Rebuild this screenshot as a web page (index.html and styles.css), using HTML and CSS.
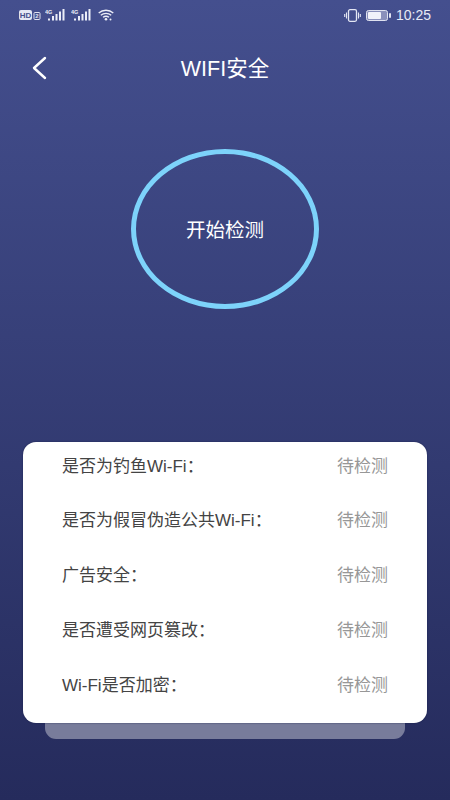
FILE: index.html
```html
<!DOCTYPE html>
<html lang="zh-CN">
<head>
<meta charset="utf-8">
<title>WIFI安全</title>
<link rel="stylesheet" href="styles.css">
</head>
<body>
<div class="page">
  <div class="status">
    <div class="status-left">
      <svg class="ic-hd" viewBox="0 0 22 10" width="22" height="10"><rect x="0" y="0" width="13" height="10" rx="2" fill="#e4e7f4"/><text x="6.5" y="8" class="hd-text">HD</text><rect x="15" y="2.5" width="6" height="7" rx="1" fill="none" stroke="#dfe2f0" stroke-width="1"/><text x="18" y="8.3" class="hd-num">2</text></svg>
      <svg class="ic-sig" viewBox="0 0 22 14" width="22" height="14"><text x="0" y="5.5" class="net">4G</text><g fill="#eceef8"><rect x="3" y="10.5" width="2" height="2"/><rect x="7" y="8" width="2" height="4.500"/><rect x="10.500" y="6" width="2" height="6.500"/><rect x="14" y="3.500" width="2" height="9"/><rect x="17.500" y="1" width="2" height="11.500"/></g></svg>
      <svg class="ic-sig" viewBox="0 0 22 14" width="22" height="14"><text x="0" y="5.5" class="net">4G</text><g fill="#eceef8"><rect x="3" y="10.5" width="2" height="2"/><rect x="7" y="8" width="2" height="4.500"/><rect x="10.500" y="6" width="2" height="6.500"/><rect x="14" y="3.500" width="2" height="9"/><rect x="17.500" y="1" width="2" height="11.500"/></g></svg>
      <svg class="ic-wifi" viewBox="0 0 16 12" width="16" height="12"><g fill="none" stroke="#eceef8" stroke-width="1.300"><path d="M.7 4C4.800.3 11.200.3 15.300 4"/><path d="M2.800 6.200C5.800 3.700 10.200 3.700 13.200 6.200"/><path d="M5 8.300C6.800 7 9.200 7 11 8.300"/></g><circle cx="8" cy="10.300" r="1.300" fill="#eceef8"/><circle cx="12.500" cy="10.500" r="1" fill="#eceef8"/></svg>
    </div>
    <div class="status-right">
      <svg class="ic-vib" viewBox="0 0 17 13" width="17" height="13"><rect x="4.500" y=".7" width="8" height="11.600" rx="1.500" fill="none" stroke="#e4e7f4" stroke-width="1.300"/><path d="M2.500 3.500v6M.7 5v3M14.500 3.500v6M16.300 5v3" stroke="#e4e7f4" stroke-width="1.100" fill="none"/></svg>
      <svg class="ic-bat" viewBox="0 0 25 11" width="25" height="11"><rect x=".5" y=".5" width="21" height="10" rx="2" fill="#8a90bb" stroke="#dfe2f0"/><rect x="2" y="2" width="13" height="7" rx="1" fill="#f1f2fa"/><rect x="23" y="3" width="2" height="5" rx="1" fill="#dfe2f0"/></svg>
      <span class="time">10:25</span>
    </div>
  </div>
  <header class="nav">
    <svg class="back" viewBox="0 0 16 24" width="16" height="24"><path d="M14 2 3 12l11 10" fill="none" stroke="#fff" stroke-width="2.400" stroke-linecap="round" stroke-linejoin="round"/></svg>
    <h1 class="title">WIFI安全</h1>
  </header>
  <div class="ring-wrap">
    <div class="ring">开始检测</div>
  </div>
  <div class="card-wrap">
    <div class="card-back"></div>
    <ul class="card">
      <li class="row"><span>是否为钓鱼Wi-Fi：</span><span class="state">待检测</span></li>
      <li class="row"><span>是否为假冒伪造公共Wi-Fi：</span><span class="state">待检测</span></li>
      <li class="row"><span>广告安全：</span><span class="state">待检测</span></li>
      <li class="row"><span>是否遭受网页篡改：</span><span class="state">待检测</span></li>
      <li class="row"><span>Wi-Fi是否加密：</span><span class="state">待检测</span></li>
    </ul>
  </div>
</div>
</body>
</html>
```

FILE: styles.css
```css
* { box-sizing: border-box; }
html, body { margin: 0; padding: 0; }
body { font-family: "Liberation Sans", "Noto Sans CJK SC", sans-serif; }
.page {
  width: 450px;
  height: 800px;
  overflow: hidden;
  background: linear-gradient(180deg, #444f8e 0%, #252b5c 100%);
  display: flex;
  flex-direction: column;
}
.status {
  height: 30px;
  padding: 0 19px 0 19px;
  display: flex;
  justify-content: space-between;
  align-items: center;
}
.status-left, .status-right { display: flex; align-items: center; }
.status-left { gap: 4px; }
.status-right { gap: 5px; }
.hd-text { font: bold 8px "Liberation Sans", sans-serif; fill: #444f8e; text-anchor: middle; }
.hd-num { font: bold 6px "Liberation Sans", sans-serif; fill: #dfe2f0; text-anchor: middle; }
.net { font: bold 5.500px "Liberation Sans", sans-serif; fill: #eceef8; }
.ic-wifi { margin-left: 1px; }
.time { font-size: 14px; color: #e8eaf6; }
.nav {
  height: 48px;
  margin-top: 14px;
  padding-bottom: 3px;
  display: flex;
  align-items: center;
  justify-content: center;
  position: relative;
}
.back { position: absolute; left: 31px; top: 12px; }
.title { margin: 0; font-size: 21.500px; font-weight: 400; color: #fff; }
.ring-wrap { margin-top: 57px; display: flex; justify-content: center; }
.ring {
  width: 188px;
  height: 160px;
  padding-bottom: 2px;
  border: 5px solid #7dd3fb;
  border-radius: 50%;
  display: flex;
  align-items: center;
  justify-content: center;
  color: #fff;
  font-size: 19.500px;
}
.card-wrap { margin: 133px 23px 0; position: relative; height: 297px; }
.card-back {
  position: absolute;
  left: 22px;
  right: 22px;
  top: 40px;
  bottom: 0;
  background: #787c9b;
  border-radius: 11px;
}
.card {
  position: relative;
  margin: 0;
  padding: 9px 39px 27px;
  list-style: none;
  height: 281px;
  background: #fff;
  border-radius: 13px;
  box-shadow: 0 0 1.500px #141a45;
  display: flex;
  flex-direction: column;
  justify-content: space-between;
}
.row {
  height: 26px;
  display: flex;
  justify-content: space-between;
  align-items: center;
  font-size: 17px;
  color: #444;
}
.state { color: #979797; }
```
